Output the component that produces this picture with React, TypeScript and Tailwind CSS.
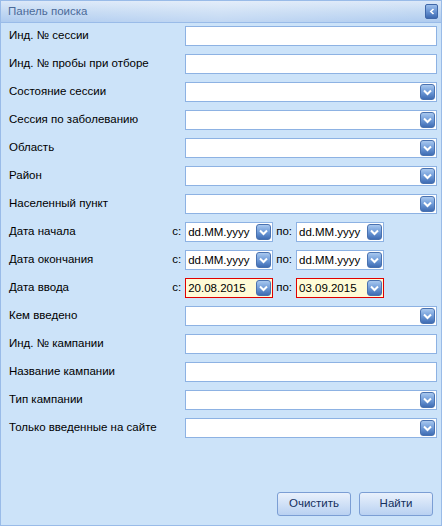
import React from "react";

const font = { fontFamily: '"Liberation Sans", Arial, sans-serif' };

const DropBtn = () => (
  <span className="absolute right-[1px] top-[1px] w-[15px] h-[16px] rounded-[3px] border border-[#4a72b0] bg-gradient-to-b from-[#a9c8ef] via-[#6f9bd8] to-[#3f6cb3] flex items-center justify-center">
    <svg width="9" height="7" viewBox="0 0 9 7">
      <path d="M1 1.5 L4.5 5 L8 1.5" stroke="#fff" strokeWidth="2" fill="none" />
    </svg>
  </span>
);

const TextBox = () => (
  <div className="w-[252px] h-[20px] bg-white border border-[#8db2e3]" />
);

const Combo = () => (
  <div className="relative w-[252px] h-[20px] bg-white border border-[#8db2e3]">
    <DropBtn />
  </div>
);

const DateBox = ({ value, err }: { value: string; err?: boolean }) => (
  <div
    className={
      "relative w-[88px] h-[20px] pl-[2px] text-[11.5px] leading-[18px] text-black " +
      (err ? "bg-[#fffbd6] border border-[#e00000]" : "bg-white border border-[#8db2e3]")
    }
  >
    {value}
    <DropBtn />
  </div>
);

const DateRange = ({ from, to, err }: { from: string; to: string; err?: boolean }) => (
  <div className="flex items-center text-[11.5px] text-black">
    <span className="mr-[4px]">с:</span>
    <DateBox value={from} err={err} />
    <span className="ml-[3px] mr-[4px]">по:</span>
    <DateBox value={to} err={err} />
  </div>
);

type Row = { label: string; kind: "text" | "combo" | "date"; from?: string; to?: string; err?: boolean };

const rows: Row[] = [
  { label: "Инд. № сессии", kind: "text" },
  { label: "Инд. № пробы при отборе", kind: "text" },
  { label: "Состояние сессии", kind: "combo" },
  { label: "Сессия по заболеванию", kind: "combo" },
  { label: "Область", kind: "combo" },
  { label: "Район", kind: "combo" },
  { label: "Населенный пункт", kind: "combo" },
  { label: "Дата начала", kind: "date", from: "dd.MM.yyyy", to: "dd.MM.yyyy" },
  { label: "Дата окончания", kind: "date", from: "dd.MM.yyyy", to: "dd.MM.yyyy" },
  { label: "Дата ввода", kind: "date", from: "20.08.2015", to: "03.09.2015", err: true },
  { label: "Кем введено", kind: "combo" },
  { label: "Инд. № кампании", kind: "text" },
  { label: "Название кампании", kind: "text" },
  { label: "Тип кампании", kind: "combo" },
  { label: "Только введенные на сайте", kind: "combo" },
];

export default function App() {
  return (
    <div
      style={font}
      className="w-[442px] h-[526px] flex flex-col border border-[#99bbe8] bg-[#cce3f9] overflow-hidden"
    >
      {/* Header */}
      <div className="relative h-[22px] shrink-0 flex items-center px-[3px] border-b border-[#99bbe8] bg-gradient-to-b from-[#dbe8f8] via-[#c3d9f3] to-[#aecbef]">
        <div className="absolute inset-0 bg-gradient-to-r from-transparent via-[#ffffff40] to-transparent" />
        <span className="relative ml-[4px] text-[11.5px] text-[#4b6a99]">Панель поиска</span>
        <span className="relative ml-auto w-[13px] h-[15px] rounded-[2px] border border-[#3f67a8] bg-gradient-to-b from-[#9dbfec] via-[#6893d2] to-[#3d69b0] flex items-center justify-center">
          <svg width="6" height="7" viewBox="0 0 6 7">
            <path d="M4.5 1 L1.8 3.5 L4.5 6" stroke="#fff" strokeWidth="1.6" fill="none" />
          </svg>
        </span>
      </div>

      {/* Fields */}
      <div className="flex flex-col gap-[8px] pt-[3px] pl-[8px] pr-[4px]">
        {rows.map((r) => (
          <div key={r.label} className="flex items-center h-[20px]">
            <span className="flex-1 text-[11.5px] text-black">{r.label}</span>
            {r.kind === "text" && <TextBox />}
            {r.kind === "combo" && <Combo />}
            {r.kind === "date" && <DateRange from={r.from!} to={r.to!} err={r.err} />}
            {r.kind === "date" && <div className="w-[53px]" />}
          </div>
        ))}
      </div>

      {/* Buttons */}
      <div className="mt-auto flex justify-end gap-[8px] pr-[8px] pb-[9px]">
        {["Очистить", "Найти"].map((t) => (
          <button
            key={t}
            className="w-[74px] h-[24px] rounded-[3px] border border-[#7b9ed4] bg-gradient-to-b from-[#e9f1fc] to-[#b9d1f1] text-[11.5px] text-[#15305e]"
          >
            {t}
          </button>
        ))}
      </div>
    </div>
  );
}
